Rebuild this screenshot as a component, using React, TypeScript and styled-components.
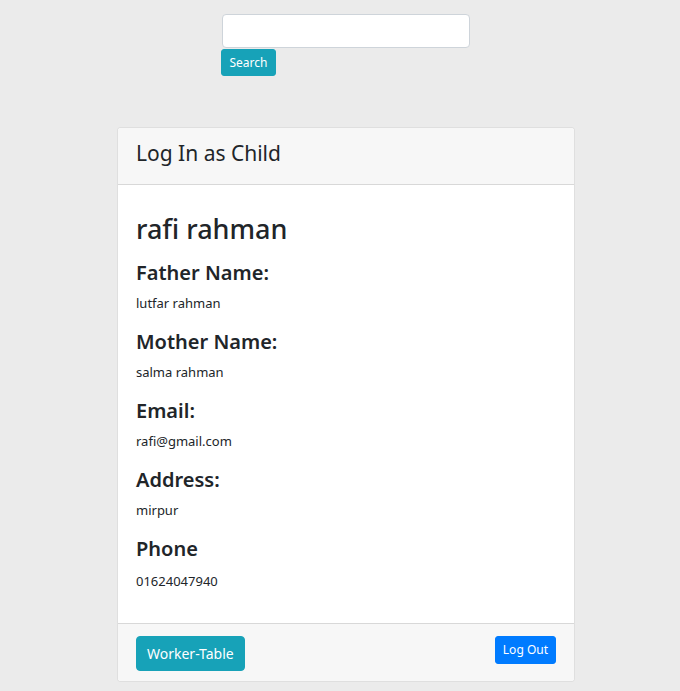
import React from "react";
import styled, { createGlobalStyle } from "styled-components";

const Global = createGlobalStyle`
  html, body { margin: 0; padding: 0; background: #ebebeb; }
  body { font-family: "Noto Sans", "Open Sans", sans-serif; color: #212529; }
  * { box-sizing: border-box; }
`;

const Page = styled.div`
  width: 680px;
  min-height: 691px;
  padding: 14px 0 0 12px;
  display: flex;
  flex-direction: column;
  align-items: center;
`;

const SearchForm = styled.form`
  width: 249px;
  margin-left: -2px;
  display: flex;
  flex-direction: column;
  align-items: flex-start;
`;

const SearchInput = styled.input`
  width: 248px;
  height: 34px;
  margin-left: 1px;
  border: 1px solid #ced4da;
  border-radius: 4px;
  background: #fff;
  outline: none;
  padding: 0 10px;
`;

const Button = styled.button<{ $variant: "info" | "primary"; $size: "sm" | "md" }>`
  border: 1px solid ${(p) => (p.$variant === "info" ? "#17a2b8" : "#007bff")};
  background: ${(p) => (p.$variant === "info" ? "#17a2b8" : "#007bff")};
  color: #fff;
  font-family: inherit;
  border-radius: ${(p) => (p.$size === "sm" ? "3px" : "4px")};
  font-size: ${(p) => (p.$size === "sm" ? "12px" : "14px")};
  height: ${(p) => (p.$size === "sm" ? "28px" : "35px")};
  padding: ${(p) => (p.$size === "sm" ? "0 7px" : "0 10px")};
  line-height: 1;
  cursor: pointer;
`;

const SearchButton = styled(Button)`
  height: 27px;
  margin-top: 1px;
  padding: 0 8px;
`;

const Card = styled.div`
  margin-top: 51px;
  width: 458px;
  background: #fff;
  border: 1px solid rgba(0, 0, 0, 0.125);
  border-radius: 4px;
  overflow: hidden;
`;

const CardHeader = styled.div`
  height: 57px;
  padding: 0 18px 6px;
  display: flex;
  align-items: center;
  background: #f7f7f7;
  border-bottom: 1px solid rgba(0, 0, 0, 0.125);
  font-size: 21px;
`;

const CardBody = styled.div`
  padding: 28px 18px 15px;
`;

const Name = styled.h2`
  margin: 0 0 16px;
  font-size: 27px;
  font-weight: 500;
  line-height: 1.2;
`;

const Label = styled.h4`
  margin: 0 0 8px;
  font-size: 20px;
  font-weight: 600;
  line-height: 24px;
`;

const Value = styled.p`
  margin: 0 0 16px;
  font-size: 13px;
  line-height: 21px;
`;

const PhoneValue = styled(Value)`
  padding-top: 2px;
`;

const CardFooter = styled.div`
  padding: 12px 18px 10px;
  display: flex;
  justify-content: space-between;
  align-items: flex-start;
  background: #f7f7f7;
  border-top: 1px solid rgba(0, 0, 0, 0.125);
`;

const fields: [string, string][] = [
  ["Father Name:", "lutfar rahman"],
  ["Mother Name:", "salma rahman"],
  ["Email:", "rafi@gmail.com"],
  ["Address:", "mirpur"],
];

export default function App() {
  return (
    <>
      <Global />
      <Page>
        <SearchForm onSubmit={(e) => e.preventDefault()}>
          <SearchInput type="text" />
          <SearchButton $variant="info" $size="sm">Search</SearchButton>
        </SearchForm>
        <Card>
          <CardHeader>Log In as Child</CardHeader>
          <CardBody>
            <Name>rafi rahman</Name>
            {fields.map(([l, v]) => (
              <React.Fragment key={l}>
                <Label>{l}</Label>
                <Value>{v}</Value>
              </React.Fragment>
            ))}
            <Label>Phone</Label>
            <PhoneValue>01624047940</PhoneValue>
          </CardBody>
          <CardFooter>
            <Button $variant="info" $size="md">Worker-Table</Button>
            <Button $variant="primary" $size="sm">Log Out</Button>
          </CardFooter>
        </Card>
      </Page>
    </>
  );
}
